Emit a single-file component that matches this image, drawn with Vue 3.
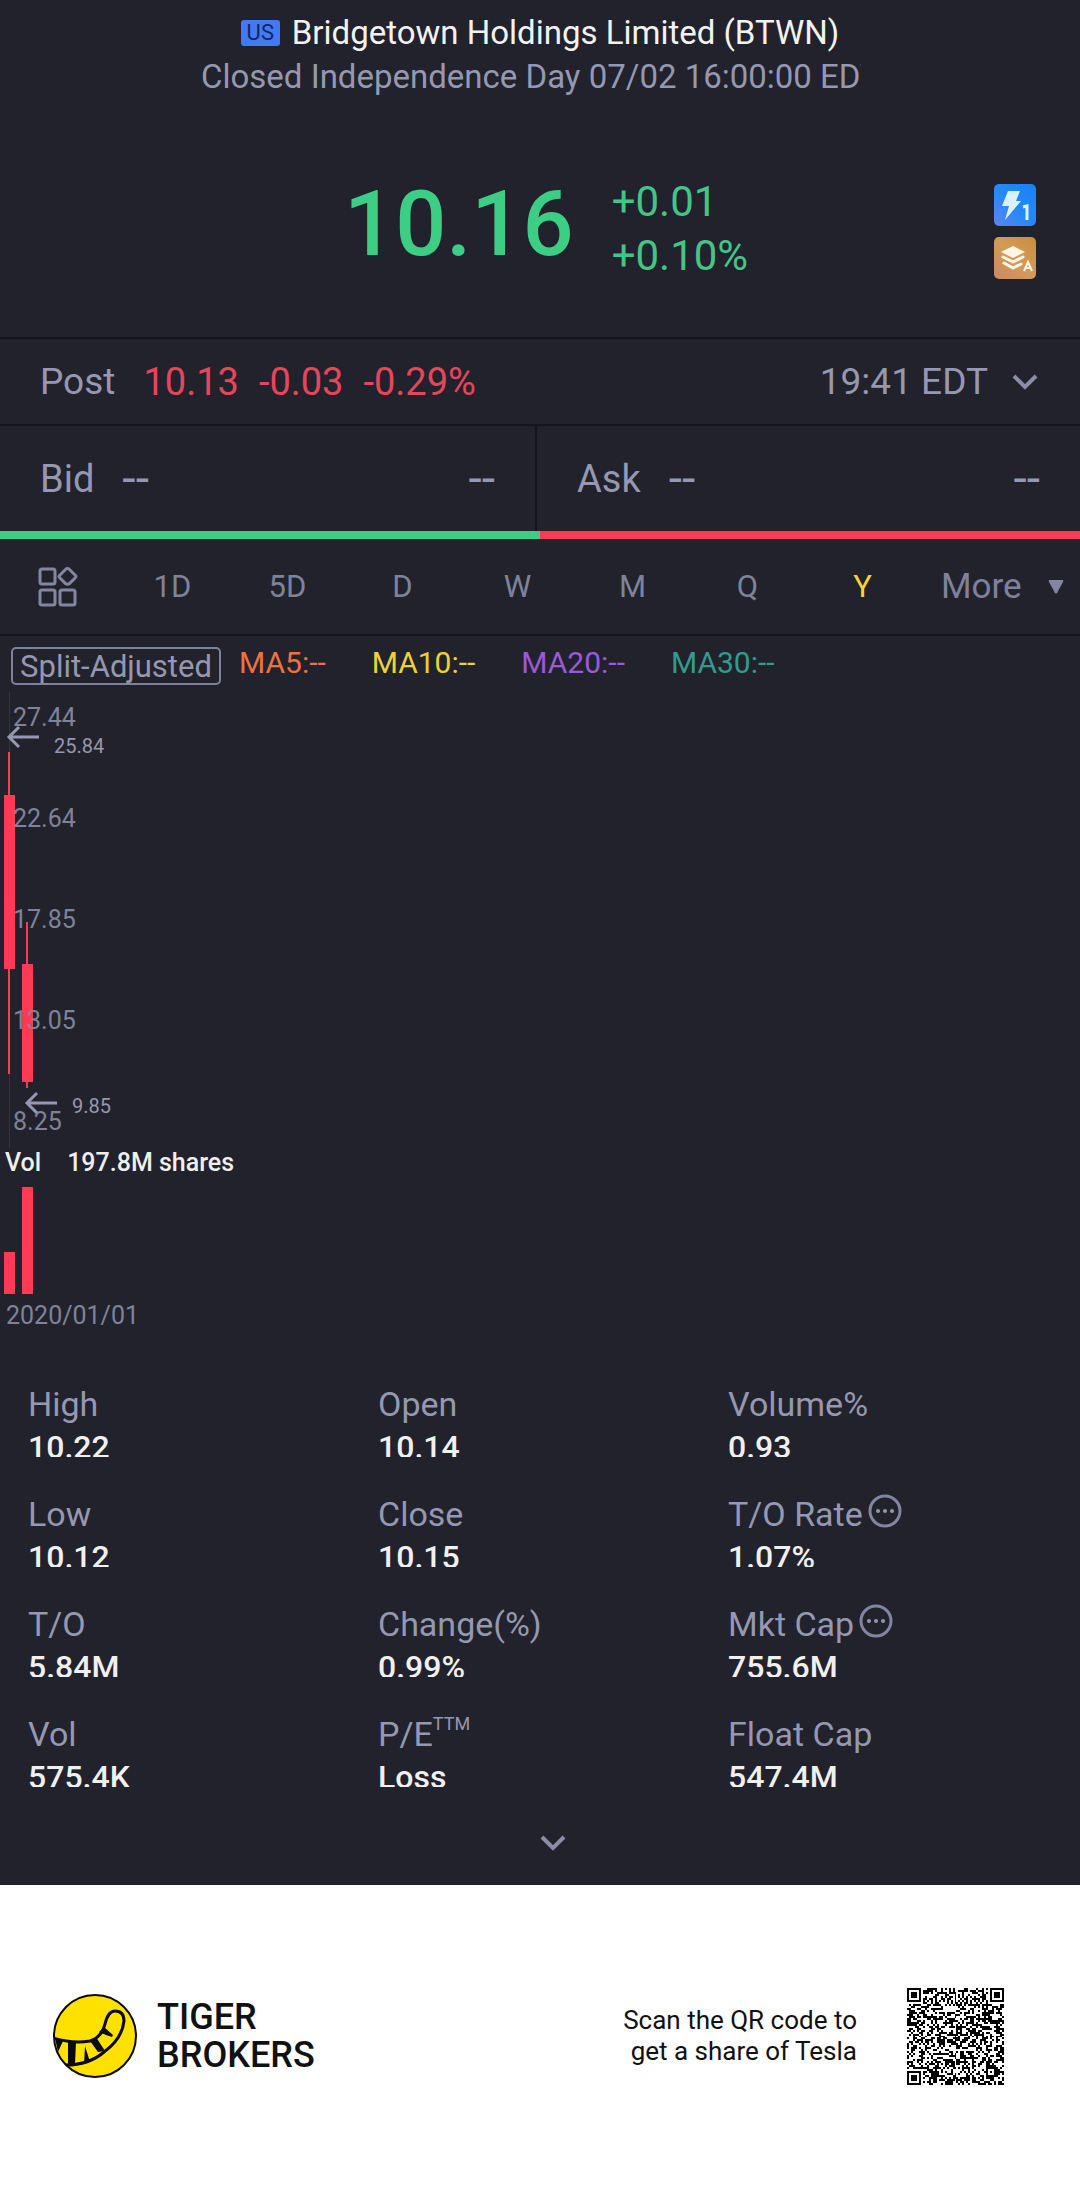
<script setup>
const periods = ['1D', '5D', 'D', 'W', 'M', 'Q', 'Y']

const averages = [
  { name: 'MA5', tone: 'ma5' },
  { name: 'MA10', tone: 'ma10' },
  { name: 'MA20', tone: 'ma20' },
  { name: 'MA30', tone: 'ma30' },
]

const prices = ['27.44', '22.64', '17.85', '13.05', '8.25']

const stats = [
  { label: 'High', value: '10.22' },
  { label: 'Open', value: '10.14' },
  { label: 'Volume%', value: '0.93' },
  { label: 'Low', value: '10.12' },
  { label: 'Close', value: '10.15' },
  { label: 'T/O Rate', value: '1.07%', info: true },
  { label: 'T/O', value: '5.84M' },
  { label: 'Change(%)', value: '0.99%' },
  { label: 'Mkt Cap', value: '755.6M', info: true },
  { label: 'Vol', value: '575.4K' },
  { label: 'P/E', sup: 'TTM', value: 'Loss' },
  { label: 'Float Cap', value: '547.4M' },
]

const QR = 49

function square(x, y, cx, cy, r) {
  const d = Math.max(Math.abs(x - cx), Math.abs(y - cy))
  return d <= r ? d : -1
}

function buildCode() {
  let seed = 20210702
  const random = () => {
    seed = (seed * 1103515245 + 12345) % 2147483648
    return seed / 2147483648
  }
  const far = QR - 4
  let path = ''
  for (let y = 0; y < QR; y++) {
    for (let x = 0; x < QR; x++) {
      let on = random() < 0.5
      if (x === 6 || y === 6) on = (x + y) % 2 === 0
      for (const [cx, cy] of [[3, 3], [far, 3], [3, far]]) {
        const d = square(x, y, cx, cy, 4)
        if (d >= 0) on = d < 2 || d === 3
      }
      const mid = square(x, y, QR - 7, QR - 7, 2)
      if (mid >= 0) on = mid !== 1
      if (on) path += `M${x} ${y}h1v1h-1z`
    }
  }
  return path
}

const code = buildCode()
</script>

<template>
  <main class="page">
    <section class="quote">
      <header class="head">
        <h1 class="name"><span class="market">US</span>Bridgetown Holdings Limited (BTWN)</h1>
        <p class="status">Closed Independence Day 07/02 16:00:00 EDT</p>
      </header>

      <div class="price-row">
        <strong class="price">10.16</strong>
        <div class="change"><span>+0.01</span><span>+0.10%</span></div>
        <div class="badges">
          <svg viewBox="0 0 42 42" role="img" aria-label="Level 1 quotes">
            <defs>
              <linearGradient id="blue" x1="0" y1="1" x2="1" y2="0">
                <stop offset="0" stop-color="#5b86ee" /><stop offset=".5" stop-color="#2389f8" /><stop offset="1" stop-color="#1682f8" />
              </linearGradient>
            </defs>
            <rect width="42" height="42" rx="5" fill="url(#blue)" />
            <path d="M14 7h12l-4 10h5L11 36l4-14H8z" fill="#d9f2ff" />
            <path d="M29 23l4-1v14" fill="none" stroke="#d9f2ff" stroke-width="3" />
          </svg>
          <svg viewBox="0 0 42 42" role="img" aria-label="Depth A">
            <defs>
              <linearGradient id="gold" x1="0" y1="1" x2="1" y2="0">
                <stop offset="0" stop-color="#cd8764" /><stop offset=".5" stop-color="#d39b57" /><stop offset="1" stop-color="#c98d3d" />
              </linearGradient>
            </defs>
            <rect width="42" height="42" rx="5" fill="url(#gold)" />
            <path d="M19 9l12 6-12 6-12-6z" fill="#fff6e6" />
            <path d="M9 20l10 5 10-5M10 26l9 5 8-4" fill="none" stroke="#fff6e6" stroke-width="3" stroke-linecap="round" stroke-linejoin="round" />
            <path d="M30 34l4-9 4 9M31 31h6" fill="none" stroke="#fff6e6" stroke-width="2" />
          </svg>
        </div>
      </div>

      <div class="post">
        <span class="post-label">Post</span>
        <span class="down">10.13</span>
        <span class="down">-0.03</span>
        <span class="down">-0.29%</span>
        <span class="time">19:41 EDT</span>
        <button class="plain" aria-label="Expand extended hours">
          <svg class="chevron" viewBox="0 0 26 16"><path d="M2 2l11 11L24 2" /></svg>
        </button>
      </div>

      <div class="book">
        <div class="side"><span>Bid</span><span class="dash">--</span><span class="size">--</span></div>
        <div class="side ask"><span>Ask</span><span class="dash">--</span><span class="size">--</span></div>
      </div>
      <div class="ratio"><i class="buy"></i><i class="sell"></i></div>

      <nav class="periods">
        <button aria-label="Chart tools" class="tools">
          <svg viewBox="0 0 40 40">
            <rect x="2" y="2" width="15" height="15" rx="2" />
            <path d="M29.500 1.500q1 0 2 1l6 6q1 1 0 2l-6 6q-2 1.500-4 0l-6-6q-1-1 0-2l6-6q1-1 2-1z" />
            <rect x="2" y="23" width="15" height="15" rx="2" />
            <rect x="22" y="23" width="15" height="15" rx="2" />
          </svg>
        </button>
        <button v-for="p in periods" :key="p" :class="{ active: p === 'Y' }">{{ p }}</button>
        <button class="more">More<svg viewBox="0 0 16 14"><path d="M2 0h12q2 0 1 2L9 13q-1 1-2 0L1 2q-1-2 1-2z" /></svg></button>
      </nav>

      <div class="legend">
        <button class="adjust">Split-Adjusted</button>
        <span v-for="m in averages" :key="m.name" :class="['avg', m.tone]">{{ m.name }}:--</span>
      </div>

      <div class="chart">
        <svg class="candles" viewBox="0 0 120 460" aria-hidden="true">
          <path d="M9.500 4v456" stroke="#34343d" />
          <path d="M9 64v322M27 234v166" stroke="#ff3b54" stroke-width="2" />
          <path d="M4 107h11v174H4zM22 276h11v118H22z" fill="#ff3b54" />
        </svg>
        <ol class="scale">
          <li v-for="p in prices" :key="p">{{ p }}</li>
        </ol>
        <svg class="candles" viewBox="0 0 120 460" aria-hidden="true">
          <path d="M39 49H10M19 39L9 49l10 10M57 415H28M37 405l-10 10 10 10" fill="none" stroke="#9598b0" stroke-width="3" />
        </svg>
        <span class="mark high">25.84</span>
        <span class="mark low">9.85</span>
      </div>

      <p class="volume"><span>Vol</span><span>197.8M shares</span></p>
      <svg class="bars" viewBox="0 0 120 107" aria-hidden="true">
        <path d="M4 65h11v42H4zM22 0h11v107H22z" fill="#ff3b54" />
      </svg>
      <p class="date">2020/01/01</p>

      <dl class="stats">
        <div v-for="s in stats" :key="s.label">
          <dt>{{ s.label }}<sup v-if="s.sup">{{ s.sup }}</sup><svg v-if="s.info" viewBox="0 0 34 34" aria-hidden="true">
            <circle cx="17" cy="17" r="15" fill="none" stroke="#8285a0" stroke-width="3" />
            <g fill="#9598b0"><circle cx="10" cy="17" r="2" /><circle cx="17" cy="17" r="2" /><circle cx="24" cy="17" r="2" /></g>
          </svg></dt>
          <dd>{{ s.value }}</dd>
        </div>
      </dl>
      <button class="plain expand" aria-label="Show more figures">
        <svg class="chevron" viewBox="0 0 26 16"><path d="M2 2l11 11L24 2" /></svg>
      </button>
    </section>

    <footer class="promo">
      <svg class="logo" viewBox="0 0 84 84" aria-hidden="true">
        <defs><clipPath id="disc"><circle cx="42" cy="42" r="41" /></clipPath></defs>
        <circle cx="42" cy="42" r="41" fill="#ffe100" />
        <g clip-path="url(#disc)">
          <path d="M0 44q20 6 37 3 12-4 15-17 3-13 10-13 9 0 9 10-2 18-20 31-15 13-38 13" fill="none" stroke="#0a0a0a" stroke-width="3" />
          <path d="M2 44l8 3-5 11zM15 48h8l-1 22h-7zM32 52l5 16-6 2zM37 47l6-4 9 14-7 1zM46 38l5-5 9 8-1 2-6-2z" fill="#0a0a0a" />
        </g>
        <circle cx="42" cy="42" r="41" fill="none" stroke="#0a0a0a" stroke-width="2" />
      </svg>
      <p class="brand">TIGER<br>BROKERS</p>
      <p class="scan">Scan the QR code to<br>get a share of Tesla</p>
      <svg class="qr" :viewBox="`0 0 ${QR} ${QR}`" role="img" aria-label="QR code" shape-rendering="crispEdges"><path :d="code" /></svg>
    </footer>
  </main>
</template>

<style>
body {
  margin: 0;
  background: #fff;
}
</style>

<style scoped>
.page {
  font-family: Roboto, "Liberation Sans", sans-serif;
  color: #9598b0;
}
h1, p, ol, dl, dd {
  margin: 0;
  padding: 0;
}
button {
  margin: 0;
  padding: 0;
  border: 0;
  background: none;
  color: inherit;
  font: inherit;
}
svg {
  display: block;
}
.quote {
  background: #22222c;
}
.head {
  padding-top: 13px;
  text-align: center;
}
.name {
  display: flex;
  align-items: center;
  justify-content: center;
  gap: 12px;
  line-height: 40px;
  font-size: 33px;
  font-weight: 400;
  color: #f2f2f2;
}
.market {
  width: 39px;
  border-radius: 3px;
  background: #4479f5;
  color: #14255e;
  font-size: 22px;
  line-height: 26px;
}
.status {
  width: 660px;
  margin: 4px auto 0;
  border-right: 18px solid transparent;
  overflow: hidden;
  white-space: nowrap;
  text-align: left;
  font-size: 33px;
  line-height: 40px;
}
.price-row {
  display: flex;
  align-items: center;
  height: 242px;
  padding: 23px 44px 0 344px;
  border-bottom: 2px solid #14141e;
  box-sizing: border-box;
}
.price {
  margin-bottom: 8px;
  font-size: 90px;
  font-weight: 500;
  line-height: 104px;
  color: #3bce84;
}
.change {
  display: flex;
  flex-direction: column;
  margin-left: 38px;
  font-size: 42px;
  line-height: 54px;
  color: #44c487;
}
.badges {
  display: flex;
  flex-direction: column;
  gap: 11px;
  margin-top: 6px;
  margin-left: auto;
}
.badges svg {
  width: 42px;
  height: 42px;
}
.post {
  display: flex;
  align-items: center;
  height: 87px;
  padding: 0 42px 0 40px;
  box-sizing: border-box;
  border-bottom: 2px solid #14141e;
  font-size: 37px;
}
.post-label {
  margin-right: 28px;
}
.down {
  margin-right: 20px;
  font-size: 38px;
  color: #e6465b;
}
.time {
  margin: 0 24px 0 auto;
}
.chevron {
  width: 26px;
  height: 16px;
  fill: none;
  stroke: #8a8da5;
  stroke-width: 4;
}
.book {
  display: grid;
  grid-template-columns: 537fr 543fr;
  height: 105px;
  font-size: 38px;
}
.side {
  display: flex;
  align-items: center;
  padding: 0 40px;
  border-right: 2px solid #14141e;
}
.ask {
  border-right: 0;
}
.dash {
  margin-left: 28px;
}
.size {
  margin-left: auto;
}
.dash, .size {
  font-size: 48px;
}
.ratio {
  display: flex;
  height: 8px;
}
.ratio i {
  flex: 1;
}
.buy {
  background: #3bce84;
}
.sell {
  background: #f93c54;
}
.periods {
  display: grid;
  grid-template-columns: repeat(8, 115fr) 160fr;
  align-items: center;
  height: 97px;
  border-bottom: 2px solid #14141e;
  box-sizing: border-box;
  font-size: 31px;
  color: #7f8299;
}
.periods .active {
  color: #f7d72f;
}
.tools svg {
  width: 40px;
  height: 40px;
  margin: 0 auto;
  fill: none;
  stroke: #8386a0;
  stroke-width: 3;
}
.more {
  display: flex;
  align-items: center;
  justify-content: space-between;
  padding: 0 16px 0 21px;
  font-size: 35px;
}
.more svg {
  width: 16px;
  height: 14px;
  fill: #8386a0;
}
.legend {
  display: flex;
  padding: 11px 0 0 11px;
  font-size: 30px;
}
.adjust {
  width: 210px;
  height: 38px;
  margin-right: 18px;
  border: 2px solid #7f8299;
  border-radius: 5px;
  box-sizing: border-box;
  font-size: 31px;
  line-height: 36px;
  white-space: nowrap;
}
.avg {
  line-height: 32px;
  margin-right: 46px;
}
.ma5 { color: #ed7242; }
.ma10 { color: #efd136; }
.ma20 { color: #9b59dc; }
.ma30 { color: #319c8c; }
.chart {
  position: relative;
  height: 460px;
  margin-top: 3px;
  overflow: hidden;
}
.candles {
  position: absolute;
  left: 0;
  top: 0;
  width: 120px;
  height: 460px;
}
.scale {
  position: relative;
  padding: 15px 0 0 13px;
  list-style: none;
  font-size: 25px;
  line-height: 30px;
  color: #7f8299;
}
.scale li {
  margin-bottom: 71px;
}
.mark {
  position: absolute;
  font-size: 20px;
  line-height: 24px;
}
.high {
  left: 54px;
  top: 46px;
}
.low {
  left: 72px;
  top: 406px;
}
.volume {
  display: flex;
  gap: 26px;
  padding-left: 5px;
  font-size: 25px;
  font-weight: 500;
  line-height: 30px;
  color: #efefef;
}
.bars {
  width: 120px;
  height: 107px;
  margin-top: 9px;
}
.date {
  margin-top: 7px;
  padding-left: 6px;
  font-size: 25px;
  line-height: 30px;
  color: #7f8299;
}
.stats {
  display: grid;
  grid-template-columns: repeat(3, 350fr) 2fr;
  row-gap: 37px;
  padding: 53px 0 0 28px;
}
.stats div:nth-child(3n) {
  grid-column: 3 / 5;
}
.stats dt {
  display: flex;
  height: 40px;
  font-size: 34px;
  line-height: 40px;
}
.stats sup {
  font-size: 18px;
  line-height: 20px;
}
.stats dt svg {
  width: 34px;
  height: 34px;
  margin-left: 5px;
}
.stats dd {
  height: 27px;
  margin-top: 6px;
  overflow: hidden;
  font-size: 32px;
  font-weight: 500;
  line-height: 34px;
  color: #f0f0f0;
}
.expand {
  display: block;
  margin: 48px auto 0;
  padding: 0 0 34px 26px;
}
.promo {
  display: flex;
  align-items: center;
  height: 302px;
  padding: 0 76px 0 53px;
  box-sizing: border-box;
  background: #fff;
  color: #111;
}
.logo {
  width: 84px;
  height: 84px;
}
.brand {
  margin-left: 20px;
  font-size: 36px;
  font-weight: 500;
  line-height: 38px;
}
.scan {
  margin: 0 50px 0 auto;
  text-align: right;
  font-size: 26px;
  line-height: 31px;
}
.qr {
  width: 97px;
  height: 97px;
}
</style>
